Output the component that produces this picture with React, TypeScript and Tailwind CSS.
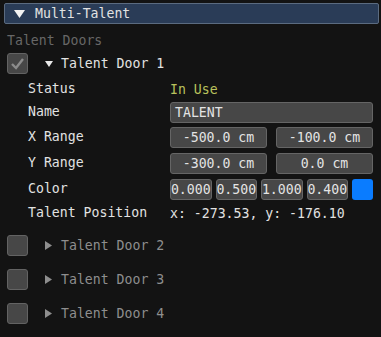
import React from 'react'

const FONT = { fontFamily: '"DejaVu Sans Mono", "Liberation Mono", monospace' }

function TriDown({ w, h, color }: { w: number; h: number; color: string }) {
  return (
    <svg width={w} height={h} viewBox={`0 0 ${w} ${h}`}>
      <polygon points={`0,0 ${w},0 ${w / 2},${h}`} fill={color} />
    </svg>
  )
}

function TriRight({ color }: { color: string }) {
  return (
    <svg width={7} height={9} viewBox="0 0 7 9">
      <polygon points="0,0 7,4.5 0,9" fill={color} />
    </svg>
  )
}

function Checkbox({ checked }: { checked?: boolean }) {
  return (
    <div className="flex h-[21px] w-[21px] shrink-0 items-center justify-center rounded-[3px] border border-[#636363] bg-[#474747]">
      {checked && (
        <svg width="15" height="13" viewBox="0 0 15 13">
          <polyline points="2,7 6,11 13,2" fill="none" stroke="#8c8c8c" strokeWidth="2.4" />
        </svg>
      )}
    </div>
  )
}

function Field({ children, className = '' }: { children: React.ReactNode; className?: string }) {
  return (
    <div
      className={`flex h-[21px] items-center overflow-hidden whitespace-nowrap rounded-[3px] border border-[#656565] bg-[#474747] text-[#e4e4e4] ${className}`}
    >
      {children}
    </div>
  )
}

function Row({ label, children, className = '' }: { label: string; children: React.ReactNode; className?: string }) {
  return (
    <div className={`flex h-[21px] items-center ${className}`}>
      <span className="w-[166px] shrink-0 -translate-y-[1px] whitespace-nowrap pl-[24px]">{label}</span>
      <div className="flex flex-1 items-center whitespace-nowrap">{children}</div>
    </div>
  )
}

const CLOSED = ['Talent Door 2', 'Talent Door 3', 'Talent Door 4']

export default function App() {
  return (
    <div
      className="h-[337px] w-[381px] overflow-hidden bg-[#131313] px-[4px] pt-[3px] text-[13.2px] leading-[16px] text-[#e2e2e2]"
      style={FONT}
    >
      {/* Collapsing header */}
      <div className="flex h-[21px] w-[375px] items-center rounded-[2px] border border-[#5b6b80] bg-[#2a3c57]">
        <div className="ml-[9px] mr-[10px] flex">
          <TriDown w={11} h={8} color="#f2f2f2" />
        </div>
        <span>Multi-Talent</span>
      </div>

      <div className="mt-[9px] pl-[3px] text-[#676767]">Talent Doors</div>

      {/* Door 1 open */}
      <div className="mt-[4px] flex h-[21px] items-center pl-[3px]">
        <Checkbox checked />
        <div className="ml-[17px] mr-[8px] flex">
          <TriDown w={8} h={6} color="#e8e8e8" />
        </div>
        <span>Talent Door 1</span>
      </div>

      <Row label="Status" className="mt-[5px]">
        <span className="text-[#b9c15c]">In Use</span>
      </Row>
      <Row label="Name" className="mt-[2px]">
        <Field className="w-[203px] pl-[4px]">TALENT</Field>
      </Row>
      <Row label="X Range" className="mt-[4px]">
        <div className="flex w-[203px] gap-[9px]">
          <Field className="flex-1 justify-center">-500.0 cm</Field>
          <Field className="flex-1 justify-center">-100.0 cm</Field>
        </div>
      </Row>
      <Row label="Y Range" className="mt-[5px]">
        <div className="flex w-[203px] gap-[9px]">
          <Field className="flex-1 justify-center">-300.0 cm</Field>
          <Field className="flex-1 justify-center">0.0 cm</Field>
        </div>
      </Row>
      <Row label="Color" className="mt-[5px]">
        <div className="flex w-[203px] gap-[4px]">
          {['0.000', '0.500', '1.000', '0.400'].map(v => (
            <Field key={v} className="flex-1 justify-center">{v}</Field>
          ))}
          <div className="h-[21px] w-[21px] shrink-0 rounded-[3px] bg-[#0a7cff]" />
        </div>
      </Row>
      <Row label="Talent Position" className="mt-[3px]">
        <span>x: -273.53, y: -176.10</span>
      </Row>

      {/* Closed doors */}
      <div className="mt-[11px] flex flex-col gap-[13px]">
        {CLOSED.map(name => (
          <div key={name} className="flex h-[21px] items-center pl-[3px]">
            <Checkbox />
            <div className="ml-[17px] mr-[9px] flex">
              <TriRight color="#8e8e8e" />
            </div>
            <span className="text-[#8e8e8e]">{name}</span>
          </div>
        ))}
      </div>
    </div>
  )
}
